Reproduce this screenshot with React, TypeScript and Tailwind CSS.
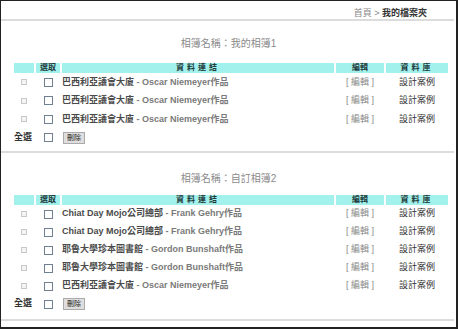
import React from "react";

type Row = { title: string; author: string };

const albumOne: Row[] = [
  { title: "巴西利亞議會大廈", author: "Oscar Niemeyer作品" },
  { title: "巴西利亞議會大廈", author: "Oscar Niemeyer作品" },
  { title: "巴西利亞議會大廈", author: "Oscar Niemeyer作品" },
];

const albumTwo: Row[] = [
  { title: "Chiat Day Mojo公司總部", author: "Frank Gehry作品" },
  { title: "Chiat Day Mojo公司總部", author: "Frank Gehry作品" },
  { title: "耶魯大學珍本圖書館", author: "Gordon Bunshaft作品" },
  { title: "耶魯大學珍本圖書館", author: "Gordon Bunshaft作品" },
  { title: "巴西利亞議會大廈", author: "Oscar Niemeyer作品" },
];

const gridCols = "grid grid-cols-[20px_24px_272px_48px_62px] gap-x-[2px]";

function Box({ small }: { small?: boolean }) {
  if (small) {
    return <span className="block h-[6px] w-[6px] border border-[#c8c8c8] bg-[#f4f4f4]" />;
  }
  return <span className="block h-[9px] w-[9px] border border-[#6f7f8f] bg-white" />;
}

function Album({
  name,
  rows,
  titleClass,
  rowClass,
}: {
  name: string;
  rows: Row[];
  titleClass: string;
  rowClass: string;
}) {
  return (
    <div>
      <div className={titleClass}>
        <span className="text-[10px] leading-[14px] text-[#8a8a8a]">相簿名稱：{name}</span>
      </div>
      <div className="mx-[13px]">
        <div className={`${gridCols} h-[10px] text-[8px] font-bold leading-[10px] text-[#1f3b3b]`}>
          <div className="bg-[#a3f1ec]" />
          <div className="bg-[#a3f1ec] text-center">選取</div>
          <div className="bg-[#a3f1ec] text-center tracking-[3px]">資料連結</div>
          <div className="bg-[#a3f1ec] text-center">編輯</div>
          <div className="bg-[#a3f1ec] text-center tracking-[3px]">資料庫</div>
        </div>
        {rows.map((r, i) => (
          <div key={i} className={`${gridCols} ${rowClass} items-center text-[9px]`}>
            <div className="flex justify-center">
              <Box small />
            </div>
            <div className="flex justify-center">
              <Box />
            </div>
            <div className="whitespace-nowrap font-bold">
              <span className="text-[#4a4a4a]">{r.title}</span>
              <span className="text-[#7a7a7a]"> - {r.author}</span>
            </div>
            <div className="text-center text-[#8a8a8a]">[ 編輯 ]</div>
            <div className="text-center text-[#333]">設計案例</div>
          </div>
        ))}
        <div className={`${gridCols} ${rowClass} items-center`}>
          <div className="whitespace-nowrap text-[9px] font-bold text-[#333]">全選</div>
          <div className="flex justify-center">
            <Box />
          </div>
          <div className="flex">
            <span className="ml-[1px] border border-[#aaa] bg-[#dedede] px-[3px] text-[7px] leading-[10px] text-[#222]">
              刪除
            </span>
          </div>
        </div>
      </div>
    </div>
  );
}

export default function App() {
  return (
    <div
      className="box-border h-[329px] w-[458px] overflow-hidden border-t border-l border-r-2 border-b-2 border-[#222] bg-white"
      style={{ fontFamily: '"Liberation Sans", "Noto Sans CJK TC", sans-serif' }}
    >
      <div className="flex h-[18px] items-end justify-end pr-[29px] text-[9px] leading-[12px]">
        <span className="text-[#888]">首頁 &gt;&nbsp;</span>
        <span className="font-bold text-[#333]">我的檔案夾</span>
      </div>
      <div className="mr-[2px] h-[2px] bg-[#dcdcdc]" />
      <Album
        name="我的相簿1"
        rows={albumOne}
        titleClass="flex h-[42px] justify-center pt-[16px]"
        rowClass="h-[18.5px]"
      />
      <div className="h-[4px]" />
      <div className="mr-[2px] h-[2px] bg-[#dcdcdc]" />
      <Album
        name="自訂相簿2"
        rows={albumTwo}
        titleClass="flex h-[42px] justify-center pt-[19px]"
        rowClass="h-[18px]"
      />
      <div className="h-[6px]" />
      <div className="mr-[2px] h-[2px] bg-[#dcdcdc]" />
    </div>
  );
}
